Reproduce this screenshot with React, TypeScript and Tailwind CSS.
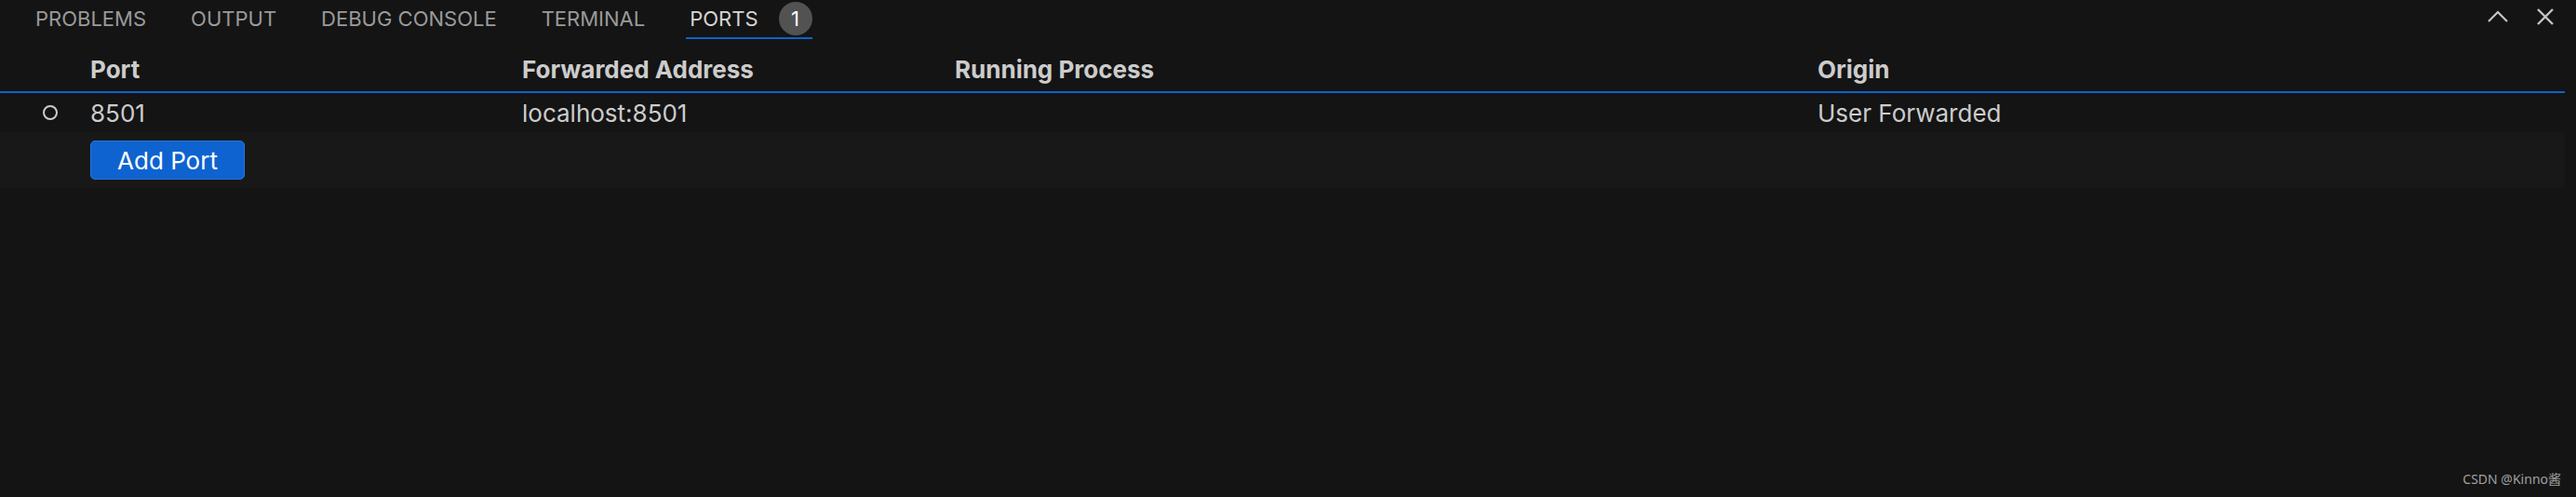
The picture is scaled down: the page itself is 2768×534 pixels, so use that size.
import React from "react";

const tabs = ["PROBLEMS", "OUTPUT", "DEBUG CONSOLE", "TERMINAL"];

export default function App() {
  return (
    <div
      className="relative w-[2768px] h-[534px] bg-[#141414] overflow-hidden"
      style={{ fontFamily: "Inter, 'Noto Sans', sans-serif" }}
    >
      {/* Tab bar */}
      <div className="h-[50px] flex items-start justify-between">
        <div className="flex items-start gap-[48px] pl-[38px]">
          {tabs.map((t) => (
            <div key={t} className="flex flex-col">
              <div className="h-[40px] flex items-center text-[22px] text-[#9a9a9a]">
                {t}
              </div>
              <div className="h-[2px]" />
            </div>
          ))}
          <div className="flex flex-col -ml-[4px]">
            <div className="h-[40px] flex items-center gap-[22px] pl-[4px]">
              <span className="text-[22px] text-[#d6d6d6]">PORTS</span>
              <span className="w-[36px] h-[36px] rounded-full bg-[#525252] text-white text-[22px] flex items-center justify-center">
                1
              </span>
            </div>
            <div className="h-[2px] bg-[#0e63d0]" />
          </div>
        </div>
        <div className="flex items-center gap-[28px] pr-[22px] h-[36px]">
          <svg width="24" height="24" viewBox="0 0 24 24" className="text-[#c5c5c5]">
            <path d="M2 17 L12 7 L22 17" fill="none" stroke="currentColor" strokeWidth="2.2" />
          </svg>
          <svg width="22" height="22" viewBox="0 0 22 22" className="text-[#c5c5c5]">
            <path d="M3 3 L19 19 M19 3 L3 19" fill="none" stroke="currentColor" strokeWidth="2.4" />
          </svg>
        </div>
      </div>

      {/* Table */}
      <div className="w-[2756px]">
        <div className="grid grid-cols-[87px_464px_465px_927px_1fr] h-[48px] items-center text-[26px] font-bold text-[#cccccc]">
          <div />
          <div className="pl-[10px]">Port</div>
          <div className="pl-[10px]">Forwarded Address</div>
          <div className="pl-[10px]">Running Process</div>
          <div className="pl-[10px]">Origin</div>
        </div>
        <div className="h-[2px] bg-[#0e63d0]" />
        <div className="grid grid-cols-[87px_464px_465px_927px_1fr] h-[42px] items-center text-[26px] text-[#cccccc]">
          <div className="flex justify-center pl-[20px]">
            <div className="w-[16px] h-[16px] rounded-full border-[2.5px] border-[#cccccc]" />
          </div>
          <div className="pl-[10px]">8501</div>
          <div className="pl-[10px]">localhost:8501</div>
          <div className="pl-[10px]" />
          <div className="pl-[10px]">User Forwarded</div>
        </div>
        <div className="h-[60px] bg-[#181818] flex items-center pl-[97px]">
          <button className="w-[166px] h-[42px] rounded-[5px] bg-[#0e63d0] border border-[#2a76d8] text-white text-[26px] flex items-center justify-center">
            Add Port
          </button>
        </div>
      </div>

      {/* Watermark */}
      <div
        className="absolute right-[16px] bottom-[9px] text-[14px] text-[#a0a0a0]"
        style={{ fontFamily: "'Noto Sans', 'Noto Sans CJK SC', sans-serif" }}
      >
        CSDN @Kinno酱
      </div>
    </div>
  );
}
